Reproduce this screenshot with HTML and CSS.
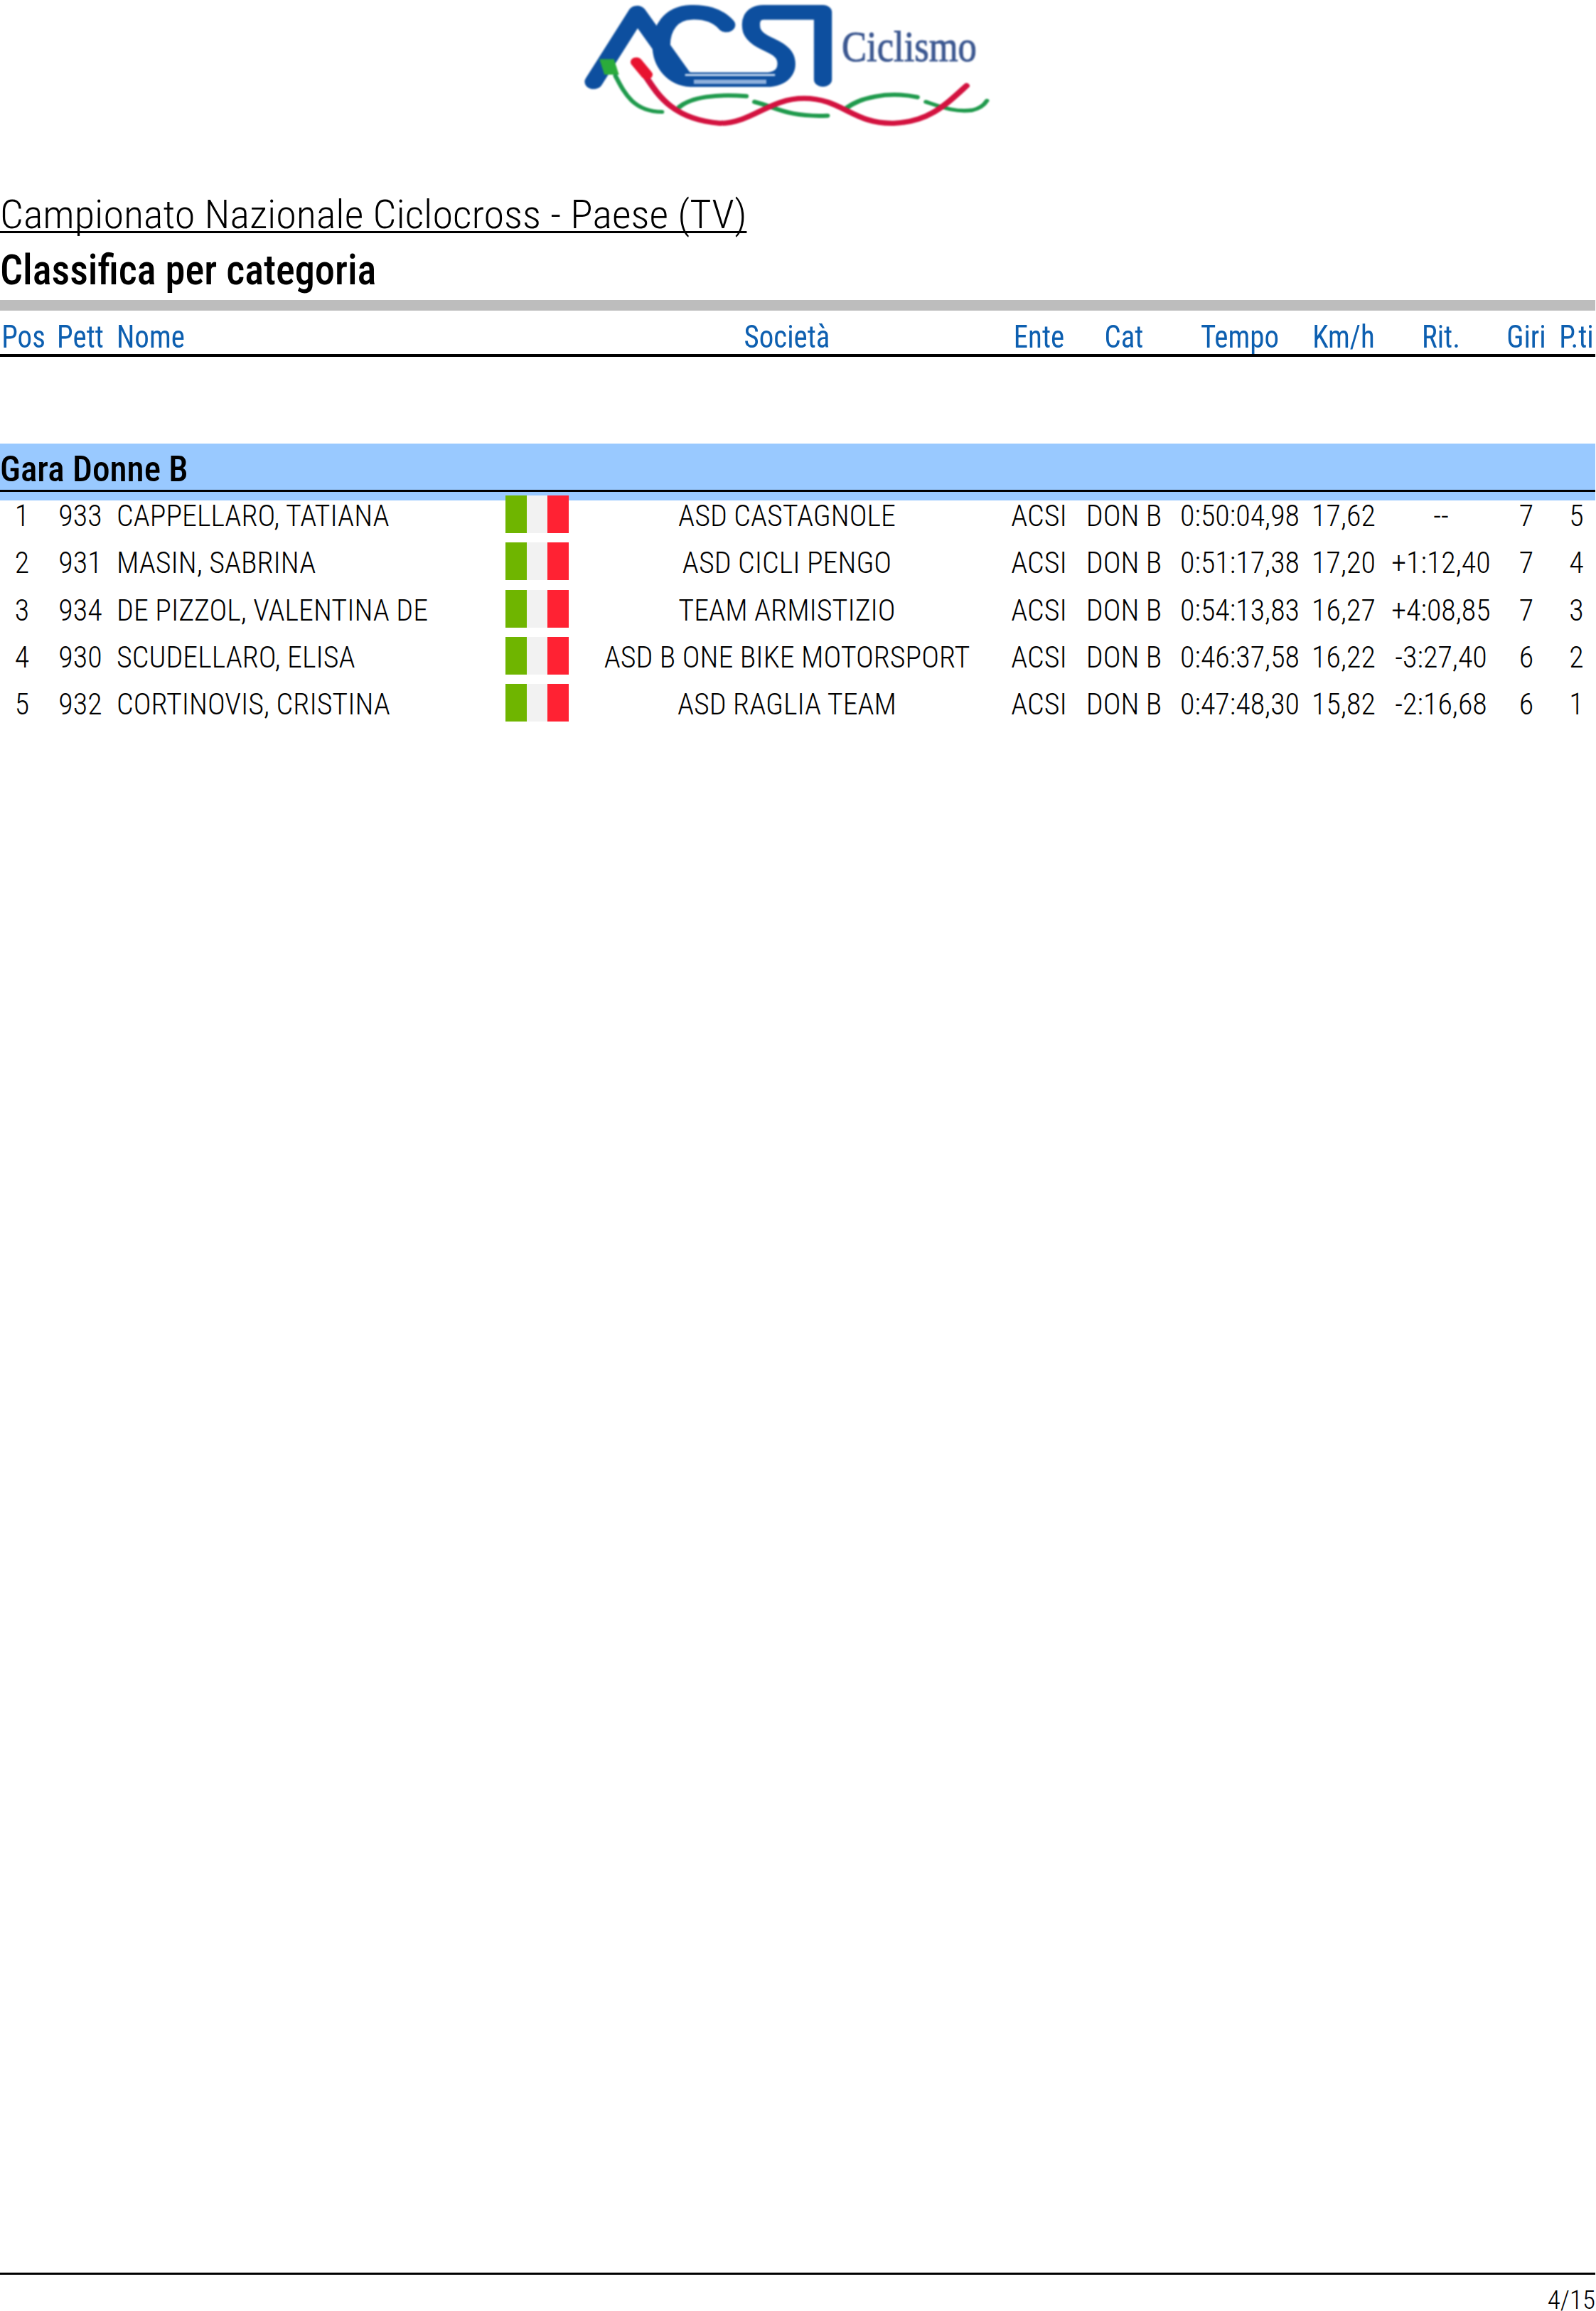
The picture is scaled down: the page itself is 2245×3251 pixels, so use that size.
FILE: index.html
```html
<!DOCTYPE html>
<html lang="it">
<head>
<meta charset="utf-8">
<title>Classifica per categoria</title>
<link rel="stylesheet" href="styles.css">
</head>
<body>
<div class="page">
  <header class="logo-wrap">
    <svg class="logo" viewBox="0 0 1568 570" preserveAspectRatio="none" role="img" aria-label="ACSI Ciclismo">
      <g fill="none" stroke="#0d4f9f" stroke-width="62" stroke-linecap="round" stroke-linejoin="round">
        <path d="M135 345 L285 55 L445 330"/>
        <path d="M592 105 C560 60 510 50 470 52 C400 55 368 120 368 190 C368 270 410 332 470 336 L740 336 C790 330 805 290 797 250 C785 190 700 190 680 130 C672 90 680 52 720 52 L925 52 L925 335"/>
      </g>
      <rect x="450" y="312" width="310" height="9" fill="#c4d8f0"/>
      <rect x="480" y="336" width="250" height="18" fill="#8fb0dc"/>
      <path d="M155 250 L205 250 L222 315 L172 315 Z" fill="#2bab3b"/>
      <g fill="none" stroke-linecap="round">
        <path stroke="#1f9a4c" stroke-width="16" d="M210 320 C240 390 270 470 370 472"/>
        <path stroke="#1f9a4c" stroke-width="18" d="M430 452 C470 410 560 395 660 406"/>
        <path stroke="#1f9a4c" stroke-width="18" d="M690 430 C760 450 800 495 940 488"/>
        <path stroke="#1f9a4c" stroke-width="18" d="M1000 462 C1050 410 1150 385 1250 410"/>
        <path stroke="#1f9a4c" stroke-width="16" d="M1280 430 C1330 450 1380 475 1440 465 C1465 458 1480 445 1490 425"/>
        <path stroke="#d3123f" stroke-width="22" d="M280 265 C340 350 370 500 570 520 C680 520 740 415 860 415 C990 415 1030 525 1170 520 C1290 515 1350 440 1420 362"/>
        <path stroke="#e8132f" stroke-width="40" d="M282 262 L318 315"/>
      </g>
      <text class="logo-text" x="990" y="258" textLength="465" lengthAdjust="spacingAndGlyphs">Ciclismo</text>
    </svg>
  </header>

  <h1 class="title"><span class="title-text">Campionato Nazionale Ciclocross - Paese (TV)</span></h1>
  <h2 class="subtitle"><span class="subtitle-text">Classifica per categoria</span></h2>
  <div class="rule"></div>

  <div class="grid head">
    <span class="cell c">Pos</span><span class="cell c">Pett</span><span class="cell">Nome</span><span></span>
    <span class="cell c">Società</span><span class="cell c">Ente</span><span class="cell c">Cat</span><span class="cell c">Tempo</span><span class="cell c">Km/h</span><span class="cell c">Rit.</span><span class="cell c">Giri</span><span class="cell c">P.ti</span>
  </div>

  <section class="band"><div class="band-title"><span class="band-text">Gara Donne B</span></div></section>

  <div class="rows">
    <div class="grid row">
      <span class="cell c">1</span><span class="cell c">933</span><span class="cell">CAPPELLARO, TATIANA</span><span class="flag"><i class="g"></i><i class="w"></i><i class="r"></i></span>
      <span class="cell c">ASD CASTAGNOLE</span><span class="cell c">ACSI</span><span class="cell c">DON B</span><span class="cell c">0:50:04,98</span><span class="cell c">17,62</span><span class="cell c">--</span><span class="cell c">7</span><span class="cell c">5</span>
    </div>
    <div class="grid row">
      <span class="cell c">2</span><span class="cell c">931</span><span class="cell">MASIN, SABRINA</span><span class="flag"><i class="g"></i><i class="w"></i><i class="r"></i></span>
      <span class="cell c">ASD CICLI PENGO</span><span class="cell c">ACSI</span><span class="cell c">DON B</span><span class="cell c">0:51:17,38</span><span class="cell c">17,20</span><span class="cell c">+1:12,40</span><span class="cell c">7</span><span class="cell c">4</span>
    </div>
    <div class="grid row">
      <span class="cell c">3</span><span class="cell c">934</span><span class="cell">DE PIZZOL, VALENTINA DE</span><span class="flag"><i class="g"></i><i class="w"></i><i class="r"></i></span>
      <span class="cell c">TEAM ARMISTIZIO</span><span class="cell c">ACSI</span><span class="cell c">DON B</span><span class="cell c">0:54:13,83</span><span class="cell c">16,27</span><span class="cell c">+4:08,85</span><span class="cell c">7</span><span class="cell c">3</span>
    </div>
    <div class="grid row">
      <span class="cell c">4</span><span class="cell c">930</span><span class="cell">SCUDELLARO, ELISA</span><span class="flag"><i class="g"></i><i class="w"></i><i class="r"></i></span>
      <span class="cell c">ASD B ONE BIKE MOTORSPORT</span><span class="cell c">ACSI</span><span class="cell c">DON B</span><span class="cell c">0:46:37,58</span><span class="cell c">16,22</span><span class="cell c">-3:27,40</span><span class="cell c">6</span><span class="cell c">2</span>
    </div>
    <div class="grid row">
      <span class="cell c">5</span><span class="cell c">932</span><span class="cell">CORTINOVIS, CRISTINA</span><span class="flag"><i class="g"></i><i class="w"></i><i class="r"></i></span>
      <span class="cell c">ASD RAGLIA TEAM</span><span class="cell c">ACSI</span><span class="cell c">DON B</span><span class="cell c">0:47:48,30</span><span class="cell c">15,82</span><span class="cell c">-2:16,68</span><span class="cell c">6</span><span class="cell c">1</span>
    </div>
  </div>

  <footer class="foot">4/15</footer>
</div>
</body>
</html>
```

FILE: styles.css
```css
html, body { margin: 0; padding: 0; background: #fff; }
body { font-family: Roboto, "Liberation Sans", sans-serif; color: #000; }
.page { width: 2244px; height: 3251px; display: flex; flex-direction: column; overflow: hidden; }
.logo-wrap { height: 190px; padding-left: 780px; flex: none; }
.logo { display: block; width: 640px; height: 190px; filter: blur(1px); }
.logo-text { font-family: "Liberation Serif", serif; font-size: 185px; fill: #3b5790; stroke: #3b5790; stroke-width: 3px; }

.title { margin: 89px 0 0; font-size: 56px; font-weight: 300; line-height: 46px; height: 49px; flex: none; }
.title-text { display: inline-block; height: 46px; border-bottom: 3px solid #000; font-stretch: 75%; transform: scaleX(1.04); transform-origin: left center; }
.subtitle { margin: 22px 0 0; font-size: 60px; font-weight: 500; line-height: 60px; height: 60px; flex: none; }
.subtitle-text { display: inline-block; font-stretch: 75%; transform: scaleX(.94); transform-origin: left center; }
.rule { margin-top: 12px; height: 15px; background: #bdbdbd; flex: none; }

.grid { display: grid; grid-template-columns: 62px 102px 547px 89px 614px 95px 144px 182px 110px 164px 76px 65px; }
.cell { display: block; white-space: nowrap; font-stretch: 75%; }
.c { text-align: center; }

.head { height: 54px; padding-top: 7px; line-height: 61px; border-bottom: 4px solid #000; font-size: 44px; color: #0d5fb0; flex: none; }
.head .cell { transform: scaleX(.93); transform-origin: left center; }
.head .c { transform-origin: center; }
.band { margin-top: 122px; height: 80px; background: #99c9ff; flex: none; }
.band-title { height: 65px; line-height: 72px; border-bottom: 3px solid #000; font-size: 50px; font-weight: 500; }
.band-text { display: inline-block; font-stretch: 75%; transform: scaleX(.985); transform-origin: left center; }
.rows { margin-top: -13px; flex: none; }
.row { height: 66.25px; line-height: 70px; font-size: 42px; font-weight: 300; }
.flag { display: flex; height: 53px; margin-top: 6px; }
.flag i { display: block; }
.g { width: 30px; background: #6fb500; }
.w { width: 29px; background: #f2f2f2; }
.r { width: 30px; background: #ff2233; }

.foot { margin-top: auto; padding-top: 20px; line-height: 31px; border-top: 3px solid #000; text-align: right; font-size: 37px; font-weight: 300; font-stretch: 75%; flex: none; }
```
